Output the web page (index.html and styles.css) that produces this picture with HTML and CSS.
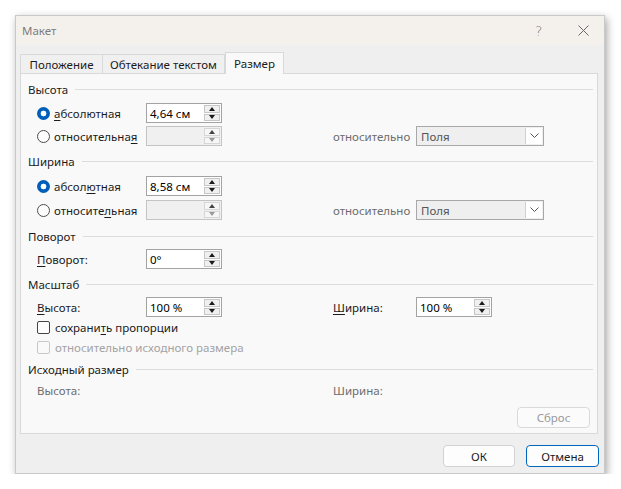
FILE: index.html
```html
<!DOCTYPE html>
<html lang="ru">
<head>
<meta charset="utf-8">
<title>Макет</title>
<link rel="stylesheet" href="styles.css">
</head>
<body>
<div class="dialog">
  <div class="titlebar">
    <span class="title">Макет</span>
    <span class="help">?</span>
    <span class="close"><svg width="11" height="11" viewBox="0 0 11 11"><path d="M0.5 0.5 L10.5 10.5 M10.5 0.5 L0.5 10.5" stroke="#6a6a6a" stroke-width="1" fill="none"/></svg></span>
  </div>
  <div class="body">
    <div class="tabs">
      <div class="tab t1">Положение</div>
      <div class="tab t2">Обтекание текстом</div>
      <div class="tab t3 active">Размер</div>
    </div>
    <div class="panel">
      <div class="sec s-h"><span>Высота</span><i></i></div>
      <div class="row m6">
        <div class="lbl"><span class="radio on"></span><span><u>а</u>бсолютная</span></div>
        <div class="spin"><span class="val">4,64 см</span><span class="btns"><b class="up"></b><b class="dn"></b></span></div>
      </div>
      <div class="row m3">
        <div class="lbl"><span class="radio"></span><span>относительна<u>я</u></span></div>
        <div class="spin dis"><span class="val"></span><span class="btns"><b class="up"></b><b class="dn"></b></span></div>
        <div class="lbl2 gray">относительно</div>
        <div class="combo"><span class="cval">Поля</span><span class="chev"><svg width="9" height="6" viewBox="0 0 9 6"><path d="M0.5 0.5 L4.5 4.5 L8.5 0.5" stroke="#555" fill="none" stroke-width="1"/></svg></span></div>
      </div>

      <div class="sec m7"><span>Ширина</span><i></i></div>
      <div class="row m7">
        <div class="lbl"><span class="radio on"></span><span>абсол<u>ю</u>тная</span></div>
        <div class="spin"><span class="val">8,58 см</span><span class="btns"><b class="up"></b><b class="dn"></b></span></div>
      </div>
      <div class="row m4">
        <div class="lbl"><span class="radio"></span><span>относите<u>л</u>ьная</span></div>
        <div class="spin dis"><span class="val"></span><span class="btns"><b class="up"></b><b class="dn"></b></span></div>
        <div class="lbl2 gray">относительно</div>
        <div class="combo"><span class="cval">Поля</span><span class="chev"><svg width="9" height="6" viewBox="0 0 9 6"><path d="M0.5 0.5 L4.5 4.5 L8.5 0.5" stroke="#555" fill="none" stroke-width="1"/></svg></span></div>
      </div>

      <div class="sec m8"><span>Поворот</span><i></i></div>
      <div class="row m5">
        <div class="lbl"><span><u>П</u>оворот:</span></div>
        <div class="spin"><span class="val">0°</span><span class="btns"><b class="up"></b><b class="dn"></b></span></div>
      </div>

      <div class="sec m7"><span>Масштаб</span><i></i></div>
      <div class="row m5">
        <div class="lbl"><span><u>В</u>ысота:</span></div>
        <div class="spin"><span class="val">100 %</span><span class="btns"><b class="up"></b><b class="dn"></b></span></div>
        <div class="lbl2"><span><u>Ш</u>ирина:</span></div>
        <div class="spin"><span class="val">100 %</span><span class="btns"><b class="up"></b><b class="dn"></b></span></div>
      </div>
      <div class="row">
        <div class="chk"><span class="box"></span><span>сохрани<u>т</u>ь пропорции</span></div>
      </div>
      <div class="row">
        <div class="chk disabled"><span class="box"></span><span>относительно исходного размера</span></div>
      </div>

      <div class="sec m4"><span>Исходный размер</span><i></i></div>
      <div class="row m3">
        <div class="lblwide gray">Высота:</div>
        <div class="gray">Ширина:</div>
      </div>
      <div class="reset-row">
        <div class="btn reset">Сброс</div>
      </div>
    </div>
    <div class="footer">
      <div class="btn ok">ОК</div>
      <div class="btn cancel">Отмена</div>
    </div>
  </div>
</div>
</body>
</html>
```

FILE: styles.css
```css
* { box-sizing: border-box; }
html, body { margin: 0; padding: 0; background: #ffffff; }
body {
  font-family: "Noto Sans", "DejaVu Sans", sans-serif;
  font-size: 11.5px;
  color: #1b1b1b;
}
u { text-decoration: underline; text-underline-offset: 2px; }

.dialog {
  margin: 15px 0 0 15px;
  width: 590px;
  height: 459px;
  display: flex;
  flex-direction: column;
  border: 1px solid #c9c9c9;
  box-shadow: 2px 3px 8px rgba(0,0,0,0.35);
  background: #efefef;
}

.titlebar {
  height: 29px;
  background: #f4f1ec;
  display: flex;
  align-items: center;
  padding-left: 6px;
  flex: none;
}
.title { color: #7c7c7c; flex: 1; font-size: 11.5px; }
.help { color: #7a7a7a; font-size: 14px; width: 8px; margin-right: 35px; font-family: "DejaVu Sans", sans-serif; font-weight: 300; }
.close { width: 11px; height: 11px; margin-right: 15px; display: flex; }

.body {
  flex: 1;
  display: flex;
  flex-direction: column;
  padding: 7px 6px 0 3px;
}

.tabs { display: flex; height: 21px; flex: none; padding-left: 1px; }
.tab {
  margin-top: 2px;
  height: 19px;
  border: 1px solid #d9d9d9;
  border-bottom: none;
  background: #f0f0f0;
  display: flex;
  align-items: center;
  justify-content: center;
  color: #1b1b1b;
  position: relative;
}
.t1 { width: 83px; }
.t2 { width: 122px; border-left: none; }
.t3 { width: 59px; }
.tab.active {
  margin-top: 0;
  height: 22px;
  background: #f9f9f9;
  z-index: 1;
  margin-bottom: -1px;
}

.panel {
  height: 361px;
  flex: none;
  background: #f9f9f9;
  border: 1px solid #d9d9d9;
  margin-left: 1px;
  padding: 0 4px 0 0;
  display: flex;
  flex-direction: column;
}

.sec {
  height: 16px;
  display: flex;
  align-items: center;
  padding-left: 7px;
  flex: none;
}
.sec span { margin-right: 7px; }
.sec i { flex: 1; height: 1px; background: #dddddd; }
.s-h { margin-top: 7px; }

.m3 { margin-top: 3px; }
.m4 { margin-top: 4px; }
.m5 { margin-top: 5px; }
.m6 { margin-top: 6px; }
.m7 { margin-top: 7px; }
.m8 { margin-top: 8px; }

.row {
  height: 20px;
  display: flex;
  align-items: center;
  padding-left: 16px;
  flex: none;
}
.lbl { width: 109px; display: flex; align-items: center; gap: 4px; }
.lbl2 { width: 83px; margin-left: 111px; }
.lblwide { width: 296px; }
.gray { color: #6d6d6d; }

.radio {
  width: 13px; height: 13px;
  border-radius: 50%;
  border: 1px solid #4d4d4d;
  background: #fdfdfd;
  flex: none;
}
.radio.on {
  border: none;
  background: radial-gradient(circle, #ffffff 0 2.6px, #005fb8 3.2px);
}

.spin {
  width: 76px;
  height: 20px;
  border: 1px solid #a3a3a3;
  background: #ffffff;
  display: flex;
  align-items: stretch;
}
.spin .val { flex: 1; padding-left: 3px; display: flex; align-items: center; color: #000; }
.btns {
  width: 17px;
  display: flex;
  flex-direction: column;
  padding: 1px 1px 1px 0;
  gap: 1px;
}
.btns b {
  flex: 1;
  background: #f0f0f0;
  border: 1px solid #c6c6c6;
  display: flex;
  align-items: center;
  justify-content: center;
}
.btns b::after {
  content: "";
  width: 0; height: 0;
  border-left: 3.5px solid transparent;
  border-right: 3.5px solid transparent;
}
.btns b.up::after { border-bottom: 4px solid #1b1b1b; }
.btns b.dn::after { border-top: 4px solid #1b1b1b; }
.spin.dis { background: #f0f0f0; border-color: #c4c4c4; }
.spin.dis .btns b { background: #f6f6f6; border-color: #d6d6d6; }
.spin.dis .btns b.up::after { border-bottom-color: #444; }
.spin.dis .btns b.dn::after { border-top-color: #9a9a9a; }

.combo {
  width: 128px;
  height: 20px;
  border: 1px solid #a8a8a8;
  background: #efefef;
  display: flex;
  align-items: stretch;
}
.cval { flex: 1; padding-left: 4px; display: flex; align-items: center; color: #555; }
.chev {
  width: 17px;
  margin: 1px;
  background: #ffffff;
  border-left: 1px solid #d0d0d0;
  display: flex;
  align-items: center;
  justify-content: center;
}

.chk { display: flex; align-items: center; gap: 5px; }
.chk .box {
  width: 13px; height: 13px;
  border: 1px solid #454545;
  border-radius: 2px;
  background: #fdfdfd;
}
.chk.disabled { color: #a3a3a3; }
.chk.disabled .box { border-color: #c8c8c8; background: #f9f9f9; }

.reset-row {
  margin-top: 7px;
  display: flex;
  justify-content: flex-end;
  padding-right: 3px;
}
.btn {
  height: 21px;
  border-radius: 4px;
  display: flex;
  align-items: center;
  justify-content: center;
  background: #fdfdfd;
  border: 1px solid #d2d2d2;
  color: #1b1b1b;
}
.reset { width: 73px; color: #9a9a9a; border-color: #dadada; background: #fbfbfb; }

.footer {
  display: flex;
  justify-content: flex-end;
  gap: 11px;
  margin-top: 11px;
  margin-right: -1px;
}
.ok { width: 72px; height: 22px; }
.cancel { width: 73px; height: 22px; border-color: #0067c0; }
```
